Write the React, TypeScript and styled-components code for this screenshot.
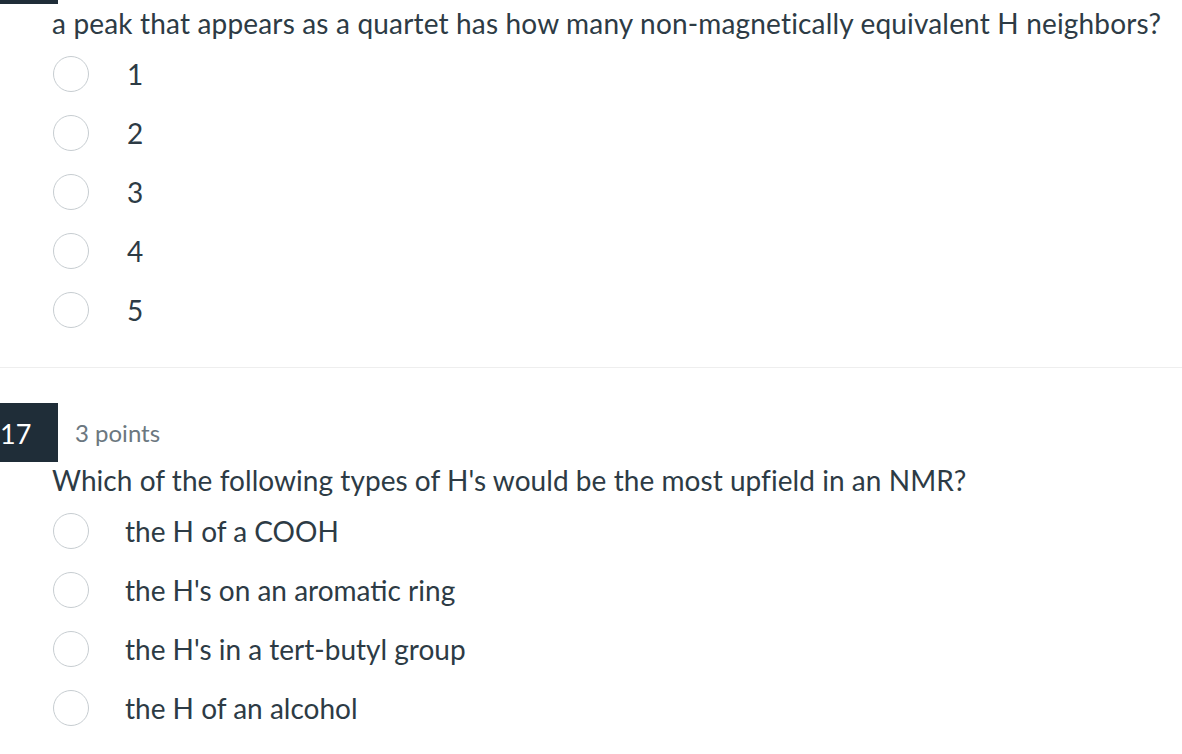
import React from 'react'
import styled, { createGlobalStyle } from 'styled-components'

const GlobalStyle = createGlobalStyle`
  html, body {
    margin: 0;
    padding: 0;
    background: #ffffff;
  }
  body {
    font-family: Lato, 'Noto Sans', sans-serif;
    color: #2d3b45;
  }
`

type Question = {
  number?: number
  points?: string
  text: string
  options: string[]
}

const questions: Question[] = [
  {
    text: 'a peak that appears as a quartet has how many non-magnetically equivalent H neighbors?',
    options: ['1', '2', '3', '4', '5'],
  },
  {
    number: 17,
    points: '3 points',
    text: "Which of the following types of H's would be the most upfield in an NMR?",
    options: [
      'the H of a COOH',
      "the H's on an aromatic ring",
      "the H's in a tert-butyl group",
      'the H of an alcohol',
    ],
  },
]

const App: React.FC = () => {
  const [first, second] = questions
  return (
    <>
      <GlobalStyle />
      <Page>
        <TopBar />
        <QuestionBlock>
          <QuestionText $spread>{first.text}</QuestionText>
          <OptionList>
            {first.options.map((o) => (
              <OptionRow key={o}>
                <RadioCircle />
                <OptionLabel $narrow>{o}</OptionLabel>
              </OptionRow>
            ))}
          </OptionList>
        </QuestionBlock>
        <Divider />
        <QuestionBlock $second>
          <Header>
            <Badge>{second.number}</Badge>
            <Points>{second.points}</Points>
          </Header>
          <QuestionText>{second.text}</QuestionText>
          <OptionList>
            {second.options.map((o) => (
              <OptionRow key={o}>
                <RadioCircle />
                <OptionLabel>{o}</OptionLabel>
              </OptionRow>
            ))}
          </OptionList>
        </QuestionBlock>
      </Page>
    </>
  )
}

export default App

const Page = styled.div`
  width: 1182px;
  height: 754px;
  overflow: hidden;
  display: flex;
  flex-direction: column;
`

const TopBar = styled.div`
  width: 58px;
  height: 4px;
  background: #1f2d38;
`

const QuestionBlock = styled.div<{ $second?: boolean }>`
  display: flex;
  flex-direction: column;
  padding-top: ${(p) => (p.$second ? '35px' : '1px')};
`

const Header = styled.div`
  display: flex;
  align-items: center;
  height: 59px;
`

const Badge = styled.div`
  width: 58px;
  height: 59px;
  background: #1f2d38;
  color: #ffffff;
  font-size: 27px;
  display: flex;
  align-items: center;
  justify-content: flex-start;
  padding-top: 2px;
  box-sizing: border-box;
`

const Points = styled.div`
  margin-left: 17px;
  font-size: 24px;
  color: #6b7780;
`

const QuestionText = styled.div<{ $spread?: boolean }>`
  padding-left: 52px;
  font-size: 28px;
  line-height: 36px;
  white-space: nowrap;
  letter-spacing: ${(p) => (p.$spread ? '0.17px' : '0.05px')};
`

const OptionList = styled.div`
  display: flex;
  flex-direction: column;
  padding-top: 3px;
`

const OptionRow = styled.div`
  display: flex;
  align-items: center;
  height: 59px;
  padding-left: 53px;
`

const RadioCircle = styled.span`
  width: 34px;
  height: 34px;
  border: 1px solid #c7cdd1;
  border-radius: 50%;
  flex-shrink: 0;
`

const OptionLabel = styled.span<{ $narrow?: boolean }>`
  margin-left: ${(p) => (p.$narrow ? '38px' : '36px')};
  font-size: 28px;
`

const Divider = styled.div`
  margin-top: 28px;
  height: 1px;
  background: #eeeeee;
`
